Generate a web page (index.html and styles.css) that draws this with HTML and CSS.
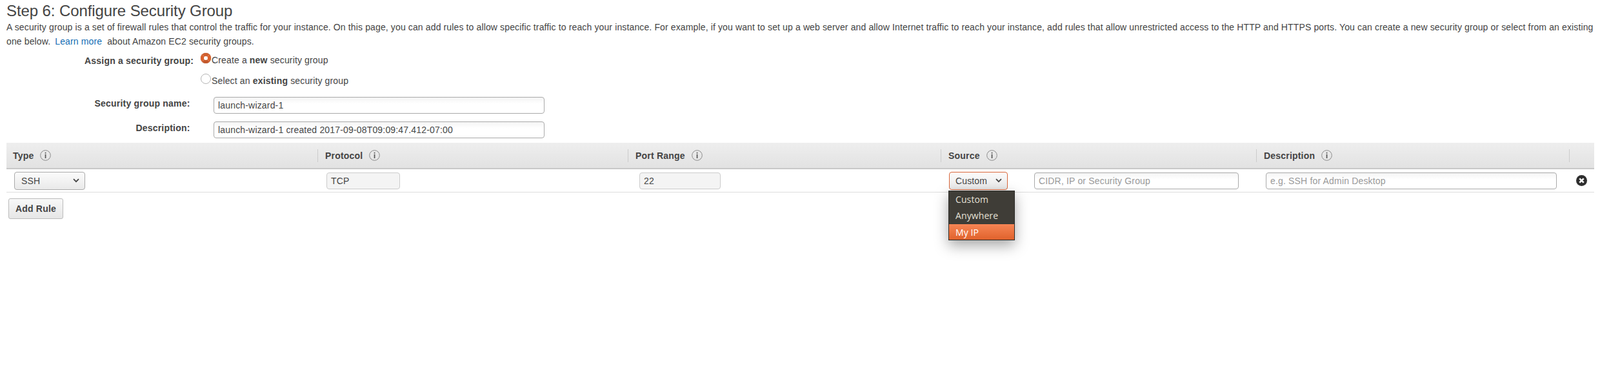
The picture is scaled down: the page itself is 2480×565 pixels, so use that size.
FILE: index.html
```html
<!DOCTYPE html>
<html lang="en">
<head>
  <meta charset="UTF-8" />
  <title>Step 6: Configure Security Group</title>
  <link rel="stylesheet" href="styles.css">
</head>
<body>
  <svg class="defs" width="0" height="0">
    <symbol id="info" viewBox="0 0 17 17">
      <circle cx="8.5" cy="8.5" r="7.8" fill="none" stroke="#8a8a8a" stroke-width="1"/>
      <rect x="7.7" y="3.8" width="1.7" height="1.8" fill="#555"/>
      <rect x="7.7" y="6.8" width="1.7" height="6.2" fill="#555"/>
    </symbol>
    <symbol id="chevron" viewBox="0 0 10 7">
      <path d="M1 1.2 L5 5.2 L9 1.2" fill="none" stroke="#444" stroke-width="1.8"/>
    </symbol>
  </svg>

  <h1 class="title">Step 6: Configure Security Group</h1>
  <p class="intro">A security group is a set of firewall rules that control the traffic for your instance. On this page, you can add rules to allow specific traffic to reach your instance. For example, if you want to set up a web server and allow Internet traffic to reach your instance, add rules that allow unrestricted access to the HTTP and HTTPS ports. You can create a new security group or select from an existing one below. <a href="#" class="link">Learn more</a> about Amazon EC2 security groups.</p>

  <form class="sg-form">
    <div class="assign-row">
      <div class="assign-label">Assign a security group:</div>
      <div class="radios">
        <label class="radio-line"><input type="radio" name="sg" checked><span class="radio-text">Create a <b>new</b> security group</span></label>
        <label class="radio-line"><input type="radio" name="sg"><span class="radio-text">Select an <b>existing</b> security group</span></label>
      </div>
    </div>
    <div class="field-row">
      <label class="field-label">Security group name:</label>
      <input class="text-input wide" type="text" value="launch-wizard-1">
    </div>
    <div class="field-row second">
      <label class="field-label">Description:</label>
      <input class="text-input wide" type="text" value="launch-wizard-1 created 2017-09-08T09:09:47.412-07:00">
    </div>
  </form>

  <div class="rules">
    <div class="rules-head">
      <div class="col-type head-cell first">Type <svg class="info"><use href="#info"/></svg></div>
      <div class="col-protocol head-cell">Protocol <svg class="info"><use href="#info"/></svg></div>
      <div class="col-port head-cell">Port Range <svg class="info"><use href="#info"/></svg></div>
      <div class="col-source head-cell">Source <svg class="info"><use href="#info"/></svg></div>
      <div class="col-desc head-cell">Description <svg class="info"><use href="#info"/></svg></div>
      <div class="col-x head-cell"></div>
    </div>
    <div class="rules-row">
      <div class="col-type">
        <div class="select select-type">SSH <svg class="chevron"><use href="#chevron"/></svg></div>
      </div>
      <div class="col-protocol"><input class="text-input readonly protocol-input" type="text" value="TCP" readonly></div>
      <div class="col-port"><input class="text-input readonly port-input" type="text" value="22" readonly></div>
      <div class="col-source source-cell">
        <div class="select select-source">Custom <svg class="chevron"><use href="#chevron"/></svg></div>
        <input class="text-input cidr-input" type="text" placeholder="CIDR, IP or Security Group">
        <ul class="menu">
          <li>Custom</li>
          <li>Anywhere</li>
          <li class="active">My IP</li>
        </ul>
      </div>
      <div class="col-desc"><input class="text-input desc-input" type="text" placeholder="e.g. SSH for Admin Desktop"></div>
      <div class="col-x">
        <svg class="remove" viewBox="0 0 17 17">
          <circle cx="8.5" cy="8.5" r="8.5" fill="#2e2e2e"/>
          <path d="M5.3 5.3 L11.7 11.7 M11.7 5.3 L5.3 11.7" stroke="#fff" stroke-width="2.6"/>
        </svg>
      </div>
    </div>
  </div>

  <button class="add-rule" type="button">Add Rule</button>
</body>
</html>
```

FILE: styles.css
```css
* {
  box-sizing: border-box;
}

html,
body {
  min-height: 565px;
}

body {
  margin: 0;
  padding: 3px 9px 0 10px;
  background: #fff;
  color: #444;
  font-family: "Liberation Sans", Arial, sans-serif;
  font-size: 14px;
  letter-spacing: 0.14px;
}

.defs {
  position: absolute;
}

.title {
  margin: 0;
  font-size: 24px;
  font-weight: normal;
  line-height: 28px;
  letter-spacing: -0.1px;
  color: #444;
}

.intro {
  margin: 0;
  line-height: 22px;
  letter-spacing: 0.13px;
}

.link {
  color: #146eb4;
  text-decoration: none;
  margin: 0 4px 0 3px;
}

b,
.assign-label,
.field-label,
.rules-head,
.add-rule {
  letter-spacing: 0.2px;
}

/* top form */
.sg-form {
  padding-top: 7px;
}

.assign-row {
  display: flex;
}

.assign-label {
  width: 290px;
  padding-top: 2px;
  text-align: right;
  font-weight: bold;
  line-height: 20px;
}

.radios {
  margin-left: 11px;
}

.radio-line {
  display: flex;
  height: 32px;
}

.radio-text {
  padding-top: 2px;
  line-height: 18px;
}

.radio-line input {
  appearance: none;
  width: 16px;
  height: 16px;
  margin: 0 1px 0 0;
  border: 1px solid #b5b5b5;
  border-radius: 50%;
  background: #fff;
}

.radio-line input:checked {
  border: 5px solid #d9622d;
  border-color: #cf5f2f #d9622d #c4572a;
  box-shadow: 0 0 1px #a04a20;
}

.field-row {
  display: flex;
  align-items: flex-start;
  margin-top: 4px;
}

.field-row.second {
  margin-top: 12px;
}

.field-label {
  width: 284.5px;
  text-align: right;
  font-weight: bold;
  line-height: 20px;
}

.wide {
  width: 513px;
  margin-left: 36.5px;
}

.text-input {
  height: 26px;
  padding: 0 6px;
  border: 1px solid #aaa;
  border-radius: 4px;
  background: linear-gradient(#f4f4f4, #fff 40%);
  color: #444;
  font-family: inherit;
  font-size: 14px;
  letter-spacing: 0.17px;
}

.text-input::placeholder {
  color: #999;
}

/* rules table */
.rules {
  margin-top: 7px;
}

.rules-head {
  display: flex;
  height: 41px;
  align-items: center;
  background: linear-gradient(#eeeeee, #e2e2e2);
  border-bottom: 2px solid #c8c8c8;
  font-weight: bold;
}

.rules-row {
  display: flex;
  height: 36px;
  align-items: center;
  border-bottom: 1px solid #ddd;
}

.col-type {
  width: 482px;
  padding-left: 12px;
}

.col-protocol {
  width: 481px;
  padding-left: 14px;
}

.col-port {
  width: 485px;
  padding-left: 18px;
}

.col-source {
  width: 489px;
  padding-left: 13px;
}

.col-desc {
  width: 485px;
  padding-left: 15px;
}

.col-x {
  width: 38px;
}

.head-cell {
  display: flex;
  align-items: center;
  height: 20px;
  padding-left: 11px;
  border-left: 1px solid #ccc;
}

.head-cell.first {
  padding-left: 10px;
  border-left: 0;
}

.info {
  width: 17px;
  height: 17px;
  margin-left: 10px;
}

.select {
  display: flex;
  align-items: center;
  justify-content: space-between;
  height: 28px;
  border: 1px solid #aaa;
  border-radius: 4px;
  background: linear-gradient(#fbfbfb, #e9e9e9);
  color: #444;
}

.select-type {
  width: 110px;
  padding: 0 8px 0 10px;
}

.select-source {
  width: 91px;
  padding: 0 8px 0 9px;
  border-color: #d9663a;
}

.chevron {
  width: 10px;
  height: 7px;
}

.readonly {
  background: #f4f4f4;
  border-color: #ccc;
}

.protocol-input {
  width: 114px;
}

.port-input {
  width: 126px;
}

.source-cell {
  display: flex;
  align-items: center;
  position: relative;
}

.cidr-input {
  width: 317px;
  margin-left: 41px;
}

.desc-input {
  width: 451px;
}

.remove {
  display: block;
  width: 17px;
  height: 17px;
  margin-left: 11px;
}

/* open dropdown */
.menu {
  position: absolute;
  top: 29px;
  left: 12px;
  width: 103px;
  margin: 0;
  padding: 0;
  list-style: none;
  background: #3f3d37;
  border: 1px solid #2e2d29;
  box-shadow: 0 8px 20px rgba(0, 0, 0, 0.35);
  color: #e4e0d6;
  font-family: "Open Sans", sans-serif;
  font-size: 14px;
  letter-spacing: 0.1px;
}

.menu li {
  height: 25px;
  line-height: 25px;
  padding-left: 10px;
}

.menu .active {
  background: linear-gradient(#f68554, #e0622c);
  border: 1px solid #3a3a36;
  border-width: 1px 0 0;
  color: #fff;
}

.add-rule {
  display: block;
  width: 85px;
  height: 32px;
  margin: 9px 0 0 3px;
  padding: 0;
  border: 1px solid #bbb;
  border-radius: 3px;
  background: linear-gradient(#f8f8f8, #e6e6e6);
  color: #444;
  font-family: inherit;
  font-size: 14px;
  font-weight: bold;
}
```
